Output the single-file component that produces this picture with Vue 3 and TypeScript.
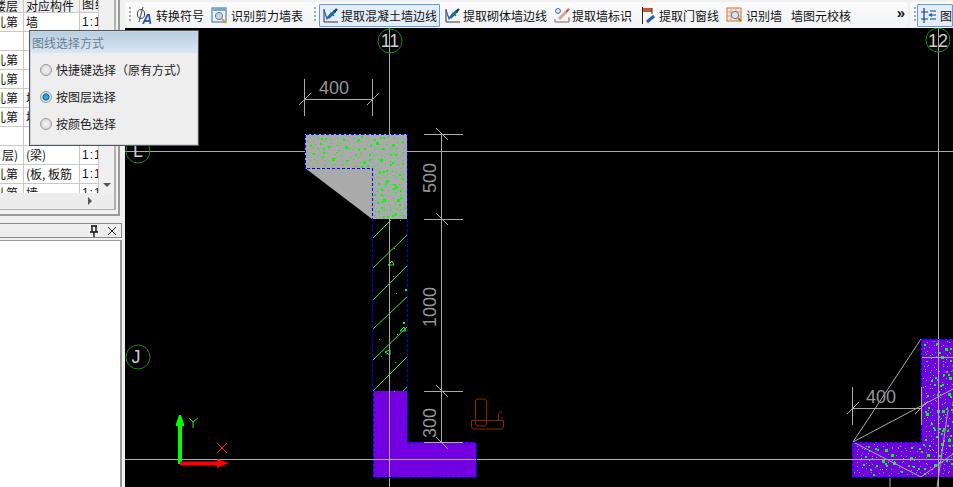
<script setup lang="ts">
import { computed } from 'vue'

interface TableRow {
  floor: string
  part: string
  scale: string
}

interface Dot {
  x: number
  y: number
  s: number
}

const rows: TableRow[] = [
  { floor: '儿第', part: '墙', scale: '1:1' },
  { floor: '', part: '', scale: '' },
  { floor: '儿第', part: '', scale: '' },
  { floor: '儿第', part: '', scale: '' },
  { floor: '儿第', part: '墙', scale: '' },
  { floor: '儿第', part: '墙', scale: '' },
  { floor: '', part: '', scale: '' },
  { floor: '层)', part: '(梁)', scale: '1:1' },
  { floor: '儿第', part: '(板, 板筋', scale: '1:1' },
  { floor: '儿第', part: '墙', scale: '1:1' }
]

const pickOptions = [
  { label: '快捷键选择（原有方式）', checked: false },
  { label: '按图层选择', checked: true },
  { label: '按颜色选择', checked: false }
]

// fixed generator, one dot per cell so the concrete speckle spreads evenly
function speckle(x: number, y: number, w: number, h: number, cols: number, lines: number, seed: number): Dot[] {
  let n = seed * 99991 + 12345
  const next = () => {
    n = (n * 48271) % 2147483647
    return n / 2147483647
  }
  for (let i = 0; i < 6; i++) next()
  const dots: Dot[] = []
  for (let row = 0; row < lines; row++) {
    for (let col = 0; col < cols; col++) {
      const px = Math.floor(x + ((col + next()) * w) / cols)
      const py = Math.floor(y + ((row + next()) * h) / lines)
      const r = next()
      dots.push({ x: px, y: py, s: r > 0.95 ? 3 : r > 0.74 ? 2 : 1 })
    }
  }
  return dots
}

const dots = computed<Dot[]>(() => [
  ...speckle(307, 136, 98, 31, 22, 7, 11),
  ...speckle(374, 168, 32, 50, 8, 12, 23),
  ...speckle(923, 341, 30, 134, 7, 32, 37),
  ...speckle(854, 444, 68, 32, 15, 7, 51),
  { x: 405, y: 289, s: 2 },
  { x: 393, y: 276, s: 1 },
  { x: 396, y: 293, s: 1 },
  { x: 403, y: 322, s: 2 },
  { x: 397, y: 334, s: 1 },
  { x: 379, y: 339, s: 1 },
  { x: 381, y: 356, s: 1 },
  { x: 395, y: 362, s: 1 },
  { x: 394, y: 248, s: 1 },
  { x: 400, y: 220, s: 1 },
  { x: 394, y: 391, s: 1 }
])

const hatch = [
  'M373 238 391 220',
  'M402 240 407 235',
  'M373 268 407 235',
  'M373 300 407 266',
  'M373 329 407 297',
  'M373 360 407 327',
  'M373 391 407 357',
  'M403 391 407 387'
]
</script>

<template>
  <div class="screen">
    <aside class="side">
      <div class="grid-frame">
        <div class="grid-inner">
          <div class="grid-body">
            <div class="grid-head">
              <span class="c1">楼层</span>
              <span class="c2">对应构件</span>
              <span class="c3">图纸</span>
            </div>
            <div v-for="(row, i) in rows" :key="i" class="grid-row">
              <span class="c1">{{ row.floor }}</span>
              <span class="c2">{{ row.part }}</span>
              <span class="c3">{{ row.scale }}</span>
            </div>
            <div class="v-scroll"><i class="arrow-down"></i></div>
          </div>
          <div class="h-scroll"><i class="arrow-right"></i></div>
        </div>
      </div>
      <div class="dock-head">
        <svg width="12" height="12" viewBox="0 0 12 12">
          <path d="M3 1h6M4 1v6M8 1v6M2 7h8M6 7v5" stroke="#111" fill="none" stroke-width="1.4" />
        </svg>
        <svg width="10" height="10" viewBox="0 0 10 10">
          <path d="M1 1l8 8M9 1l-8 8" stroke="#222" fill="none" />
        </svg>
      </div>
      <div class="dock-body"></div>
    </aside>

    <main class="work">
      <div class="toolbar">
        <div class="band band-main">
          <i class="grip"></i>
          <button class="tool">
            <svg width="17" height="17" viewBox="0 0 17 17">
              <ellipse cx="6" cy="7" rx="3.6" ry="4.4" fill="none" stroke="#444" />
              <path d="M8 0 4 15" stroke="#444" fill="none" />
              <path d="M8 17 12.5 8h1.5l1.4 9M10 14h5" stroke="#2b5da8" fill="none" stroke-width="1.8" />
            </svg>
            <span class="tool-gap wide">转换符号</span>
          </button>
          <button class="tool">
            <svg width="17" height="17" viewBox="0 0 17 17">
              <rect x="1" y="1" width="14" height="14" fill="#f4f7fb" stroke="#2c6aa8" />
              <path d="M1 1h14v3H1z" fill="#7da6cf" />
              <circle cx="8" cy="9" r="3.6" fill="#bcd9ee" stroke="#6b7f90" />
              <path d="M11 12l4 4" stroke="#e29a2e" stroke-width="2" />
            </svg>
            <span class="tool-gap">识别剪力墙表</span>
          </button>
          <i class="grip grip-mid"></i>
          <button class="tool active">
            <svg width="18" height="17" viewBox="0 0 18 17">
              <path d="M2 2v13h14" fill="none" stroke="#333" />
              <path d="M2 3l3 9 4-6 3 3" fill="none" stroke="#2b5da8" stroke-width="1.2" />
              <path d="M6 11l7-7" stroke="#1d6f9c" stroke-width="3" />
              <path d="M12 5l3-3" stroke="#123f66" stroke-width="2.4" />
            </svg>
            <span class="tool-gap tight">提取混凝土墙边线</span>
          </button>
          <button class="tool">
            <svg width="18" height="17" viewBox="0 0 18 17">
              <path d="M2 2v13h14" fill="none" stroke="#333" />
              <path d="M2 3l3 9 4-6 3 3" fill="none" stroke="#2b5da8" stroke-width="1.2" />
              <path d="M6 11l7-7" stroke="#1d6f9c" stroke-width="3" />
              <path d="M12 5l3-3" stroke="#123f66" stroke-width="2.4" />
            </svg>
            <span class="tool-gap tight">提取砌体墙边线</span>
          </button>
          <button class="tool after-wide">
            <svg width="17" height="17" viewBox="0 0 17 17">
              <circle cx="4" cy="4" r="2.4" fill="none" stroke="#2b5da8" />
              <path d="M1 12v3h14v-5" fill="none" stroke="#7a6a55" />
              <path d="M5 12l7-7" stroke="#d9a98c" stroke-width="3" />
              <path d="M12 5l3-3" stroke="#c0563a" stroke-width="2.2" />
            </svg>
            <span class="tool-gap tight">提取墙标识</span>
          </button>
          <button class="tool">
            <svg width="17" height="17" viewBox="0 0 17 17">
              <path d="M1.5 0v17" stroke="#222" />
              <path d="M2 1h9v4H2z" fill="#c9573a" />
              <path d="M11 1v6" stroke="#333" />
              <path d="M6 15l7-6" stroke="#2b5da8" stroke-width="3" />
            </svg>
            <span class="tool-gap tight">提取门窗线</span>
          </button>
          <button class="tool after-wide">
            <svg width="17" height="17" viewBox="0 0 17 17">
              <rect x="1" y="1" width="14" height="13" fill="#fbe6d8" stroke="#d0703c" />
              <path d="M1 5h14M1 9h14M5 1v13M10 1v13" stroke="#e59a70" />
              <circle cx="9" cy="8" r="3.6" fill="#d5e5ef" stroke="#6b7f90" />
              <path d="M12 11l3 3" stroke="#a8741f" stroke-width="2" />
            </svg>
            <span class="tool-gap">识别墙</span>
          </button>
          <button class="tool">墙图元校核</button>
          <span class="more">»</span>
        </div>
        <div class="band band-next">
          <i class="grip"></i>
          <button class="tool active tool-last">
            <svg width="17" height="17" viewBox="0 0 17 17">
              <path d="M4 1v15M1 5h7M1 12h7M10 4h6M10 8h6M10 12h6" stroke="#1f3f78" fill="none" stroke-width="1.2" />
              <path d="M8 8l4-2v4z" fill="#2b5da8" />
            </svg>
            <span class="tool-gap">图</span>
          </button>
        </div>
      </div>

      <svg class="canvas" viewBox="125 28 828 459" width="828" height="459">
        <rect x="125" y="28" width="828" height="459" fill="#000" />

        <!-- wall at axis 11 -->
        <path d="M305 134H407V219H372L305 168Z" fill="#aaa" />
        <path d="M373 391H407V442H476V477H373Z" fill="#7300e0" />
        <path d="M921 339H953V477H852V442H921Z" fill="#7300e0" />
        <rect
          v-for="(d, i) in dots"
          :key="i"
          :x="d.x"
          :y="d.y"
          :width="d.s"
          :height="d.s"
          fill="#00ff00"
        />
        <path
          v-for="line in hatch"
          :key="line"
          :d="line"
          stroke="#2bee2b"
          fill="none"
        />
        <path
          d="M388 265l4-4 2 4zM400 331l4-4 2 4zM385 352l5-2v5z"
          stroke="#2bee2b"
          fill="none"
        />

        <!-- grid lines -->
        <g stroke="#aaa" fill="none" shape-rendering="crispEdges">
          <path d="M389.5 28V487M938.5 28V487M125 151.5H953M125 459.5H953M921 357.5H953" />
        </g>
        <g stroke="#aaa" fill="none">
          <path d="M853 442 921 339M853 442 953 389M853 442 921 477 953 454M937 487 948 410" />
        </g>

        <path
          d="M305.5 134.5H407.5V219M305.5 134.5V168.5H372.5V219M372.5 219V391M407.5 219V391M373.5 391V477.5H476.5V442.5H407.5V391"
          fill="none"
          stroke="#0000ff"
          stroke-dasharray="3 2"
          shape-rendering="crispEdges"
        />
        <path
          d="M921.5 339.5H953M921.5 339.5V442.5H852.5V477.5H921"
          fill="none"
          stroke="#0000ff"
          stroke-dasharray="3 2"
          shape-rendering="crispEdges"
        />

        <!-- axis bubbles -->
        <g fill="none" stroke="#109010">
          <circle cx="390" cy="41" r="12" />
          <circle cx="938" cy="40" r="12" />
          <circle cx="138" cy="151" r="12" />
          <circle cx="138" cy="357" r="12" />
        </g>
        <g class="axis-label" fill="#ccc" text-anchor="middle">
          <text x="390" y="47">11</text>
          <text x="938" y="47">12</text>
          <text x="138" y="157">L</text>
          <text x="136" y="363">J</text>
        </g>

        <!-- dimensions -->
        <g stroke="#aaa" fill="none">
          <path d="M304.5 79V116M372.5 79V116M305 99.5H372M299 105l12-12M367 105l12-12" />
          <path d="M441.5 134V442M424 134.5H463M424 219.5H463M424 391.5H463M424 442.5H463" />
          <path d="M436 128l12 12M436 213l12 12M436 385l12 12M436 437l12 12" />
          <path d="M852.5 387V425M921.5 387V425M852 408.5H921M847 414l12-12M915 414l12-12M890 478V487" />
        </g>
        <g class="dim-label" fill="#969696" text-anchor="middle">
          <text x="334" y="94">400</text>
          <text x="881" y="403">400</text>
          <text transform="translate(436 178) rotate(-90)">500</text>
          <text transform="translate(436 307) rotate(-90)">1000</text>
          <text transform="translate(436 423) rotate(-90)">300</text>
        </g>

        <!-- rebar symbol -->
        <path
          d="M475.5 400.5 477 399H485L486.5 401V425L485 426H477L475.5 424ZM471.5 420.5H503.5V427L502 429H473L471.5 427ZM498.5 420V414L500 412H502M501 418H503"
          fill="none"
          stroke="#8a2408"
        />

        <!-- ucs icon -->
        <path d="M178 464V426H176V424L179 415H181L184 424V426H182V464Z" fill="#00ff00" />
        <path d="M180 461.5H217V459L229 463 217 468V465.5H180Z" fill="#ff0000" />
        <path d="M189 418l4 4 5-4M193 422v6" stroke="#22e622" fill="none" />
        <path d="M217 443l10 10M227 443l-10 10" stroke="#ff2020" fill="none" />
      </svg>
    </main>

    <section class="popup">
      <div class="popup-title">图线选择方式</div>
      <label v-for="opt in pickOptions" :key="opt.label" class="popup-option">
        <i class="radio" :class="{ on: opt.checked }"></i>
        <span>{{ opt.label }}</span>
      </label>
    </section>
  </div>
</template>

<style>
html,
body {
  margin: 0;
  background: #f0f0f0;
}
</style>

<style scoped>
.screen {
  position: relative;
  display: flex;
  width: 953px;
  height: 487px;
  overflow: hidden;
  font-family: "Noto Sans CJK SC", "Liberation Sans", sans-serif;
  font-size: 12px;
  color: #111;
  background: #f0f0f0;
  text-spacing-trim: space-all;
}

.side {
  display: flex;
  flex-direction: column;
  width: 125px;
  flex: none;
}

.grid-frame {
  width: 120px;
  height: 216px;
  box-sizing: border-box;
  padding: 0 2px 4px 0;
  border-right: 2px solid #9a9a9a;
  border-bottom: 2px solid #9a9a9a;
  background: #f0f0f0;
}

.grid-inner {
  border-right: 2px solid #b0b0b0;
  border-bottom: 1px solid #b0b0b0;
}

.grid-body {
  position: relative;
  height: 193px;
  overflow: hidden;
  background: #fff;
}

.grid-head,
.grid-row {
  display: grid;
  grid-template-columns: 24px 56px 19px;
  box-sizing: border-box;
  width: 99px;
}

.grid-head {
  height: 13px;
  align-items: end;
  background: #f0f0f0;
  line-height: 11px;
  overflow: hidden;
}

.grid-row {
  height: 19px;
  line-height: 18px;
}

.grid-head span,
.grid-row span {
  height: 100%;
  box-sizing: border-box;
  overflow: hidden;
  white-space: nowrap;
  border-right: 1px solid #c8c8c8;
  border-bottom: 1px solid #c8c8c8;
}

.c1 {
  display: flex;
  justify-content: flex-end;
  padding-right: 5px;
}

.c2 {
  display: block;
  padding-left: 2px;
}

.c3 {
  display: block;
  padding-left: 2px;
  letter-spacing: 1px;
  font-family: "Liberation Sans", "Noto Sans CJK SC", sans-serif;
}

.v-scroll {
  position: absolute;
  top: 0;
  right: 0;
  bottom: 0;
  width: 15px;
  background: #f0f0f0;
}

.arrow-down {
  position: absolute;
  left: 4px;
  top: 183px;
  border-left: 4px solid transparent;
  border-right: 4px solid transparent;
  border-top: 4px solid #555;
}

.h-scroll {
  display: flex;
  justify-content: flex-end;
  align-items: center;
  height: 16px;
  padding-right: 22px;
  background: #ececec;
}

.arrow-right {
  border-top: 4px solid transparent;
  border-bottom: 4px solid transparent;
  border-left: 4px solid #555;
}

.dock-head {
  display: flex;
  justify-content: flex-end;
  align-items: center;
  gap: 7px;
  box-sizing: border-box;
  width: 122px;
  height: 15px;
  margin-top: 7px;
  padding-right: 4px;
  background: #eeeeee;
  border-top: 1px solid #8a8a8a;
  border-bottom: 1px solid #8a8a8a;
  border-right: 1px solid #8a8a8a;
}

.dock-body {
  flex: 1;
  width: 122px;
  box-sizing: border-box;
  margin-top: 2px;
  background: #fff;
  border-top: 1px solid #999;
  border-right: 2px solid #999;
}

.work {
  display: flex;
  flex-direction: column;
  flex: 1;
  min-width: 0;
}

.toolbar {
  display: flex;
  align-items: stretch;
  gap: 2px;
  height: 28px;
  background: #f0f0f0;
}

.band {
  display: flex;
  align-items: center;
  height: 26px;
  margin-top: 2px;
  background: linear-gradient(#fbfbfb, #f1f3f5);
  border-radius: 3px;
}

.band-main {
  width: 785px;
  padding-left: 3px;
  box-sizing: border-box;
}

.band-next {
  flex: 1;
  padding-left: 3px;
}

.grip {
  width: 2px;
  height: 16px;
  flex: none;
  margin: 0 1px;
  background: repeating-linear-gradient(#a8a8a8 0 2px, transparent 2px 4px);
}

.grip-mid {
  margin: 0 3px 0 7px;
}

.tool {
  display: flex;
  align-items: center;
  height: 23px;
  padding: 0 2px;
  margin-right: 1px;
  font: inherit;
  color: inherit;
  white-space: nowrap;
  background: none;
  border: 1px solid transparent;
  border-radius: 1px;
}

.tool.active {
  background: #e3eef9;
  border-color: #5b9ddd;
}

.tool-gap {
  margin-left: 3px;
}

.tool-gap.wide {
  margin-left: 4px;
}

.tool-gap.tight {
  margin-left: 1px;
}

.after-wide {
  margin-right: 3px;
}

.tool-last {
  padding-right: 0;
  margin-right: 0;
}

.more {
  margin-left: auto;
  margin-right: 3px;
  margin-top: -6px;
  font-family: "Liberation Sans", sans-serif;
  font-size: 15px;
  font-weight: 700;
}

.canvas {
  display: block;
  flex: none;
}

.axis-label text {
  font-family: "Liberation Sans", sans-serif;
  font-size: 18px;
}

.dim-label text {
  font-family: "Liberation Sans", sans-serif;
  font-size: 18px;
}

.popup {
  position: absolute;
  left: 29px;
  top: 30px;
  width: 170px;
  height: 116px;
  box-sizing: border-box;
  background: #eeeeee;
  border: 1px solid #555;
  box-shadow: inset 0 0 0 1px #c8d4de;
}

.popup-title {
  height: 21px;
  margin: 1px 1px 3px;
  padding-left: 1px;
  line-height: 21px;
  color: #6a7d92;
  background: linear-gradient(#b9cfe2, #d9e7f4);
}

.popup-option {
  display: flex;
  align-items: center;
  gap: 4px;
  height: 27px;
  padding-left: 10px;
  color: #222;
}

.radio {
  flex: none;
  box-sizing: border-box;
  width: 12px;
  height: 12px;
  border: 1px solid #9a9a9a;
  border-radius: 50%;
  background: radial-gradient(#f4f4f4, #cfcfcf);
}

.radio.on {
  background: radial-gradient(circle, #27a6e8 0 2px, #0d5d90 3px, #e8e8e8 4px);
}
</style>
